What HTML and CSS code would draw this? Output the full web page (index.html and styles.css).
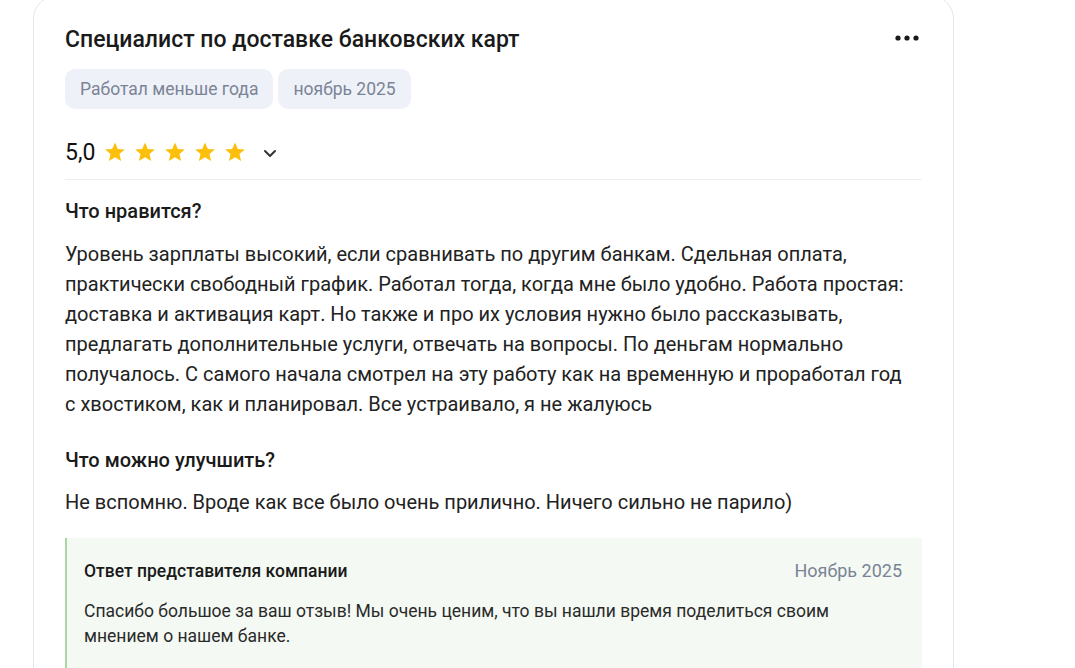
FILE: index.html
```html
<!DOCTYPE html>
<html lang="ru">
<head>
<meta charset="utf-8">
<link rel="stylesheet" href="styles.css">
</head>
<body>
<div class="page">
  <article class="card">
    <header class="head">
      <h2 class="title">Специалист по доставке банковских карт</h2>
      <button class="more" aria-label="Ещё">
        <svg width="24" height="6" viewBox="0 0 24 6"><circle cx="3" cy="3" r="2.6" fill="#1a1a1a"/><circle cx="12" cy="3" r="2.6" fill="#1a1a1a"/><circle cx="21" cy="3" r="2.6" fill="#1a1a1a"/></svg>
      </button>
    </header>
    <div class="tags">
      <span class="tag">Работал меньше года</span>
      <span class="tag">ноябрь 2025</span>
    </div>
    <div class="rating">
      <span class="score">5,0</span>
      <span class="stars">
        <svg class="star" viewBox="0 0 24 24"><path d="M12 1.5l3.1 7.1 7.6.6-5.8 5 1.8 7.5L12 17.7l-6.7 4 1.8-7.5-5.8-5 7.6-.6z" fill="#fcbf0b"/></svg>
        <svg class="star" viewBox="0 0 24 24"><path d="M12 1.5l3.1 7.1 7.6.6-5.8 5 1.8 7.5L12 17.7l-6.7 4 1.8-7.5-5.8-5 7.6-.6z" fill="#fcbf0b"/></svg>
        <svg class="star" viewBox="0 0 24 24"><path d="M12 1.5l3.1 7.1 7.6.6-5.8 5 1.8 7.5L12 17.7l-6.7 4 1.8-7.5-5.8-5 7.6-.6z" fill="#fcbf0b"/></svg>
        <svg class="star" viewBox="0 0 24 24"><path d="M12 1.5l3.1 7.1 7.6.6-5.8 5 1.8 7.5L12 17.7l-6.7 4 1.8-7.5-5.8-5 7.6-.6z" fill="#fcbf0b"/></svg>
        <svg class="star" viewBox="0 0 24 24"><path d="M12 1.5l3.1 7.1 7.6.6-5.8 5 1.8 7.5L12 17.7l-6.7 4 1.8-7.5-5.8-5 7.6-.6z" fill="#fcbf0b"/></svg>
      </span>
      <svg class="chev" width="14" height="9" viewBox="0 0 14 9"><path d="M2 2l5 5 5-5" fill="none" stroke="#333" stroke-width="2" stroke-linecap="round" stroke-linejoin="round"/></svg>
    </div>
    <div class="section">
      <h3 class="sub">Что нравится?</h3>
      <p class="text">Уровень зарплаты высокий, если сравнивать по другим банкам. Сдельная оплата, практически свободный график. Работал тогда, когда мне было удобно. Работа простая: доставка и активация карт. Но также и про их условия нужно было рассказывать, предлагать дополнительные услуги, отвечать на вопросы. По деньгам нормально получалось. С самого начала смотрел на эту работу как на временную и проработал год с хвостиком, как и планировал. Все устраивало, я не жалуюсь</p>
      <h3 class="sub sub2">Что можно улучшить?</h3>
      <p class="text text2">Не вспомню. Вроде как все было очень прилично. Ничего сильно не парило)</p>
    </div>
    <div class="reply">
      <div class="reply-head">
        <span class="reply-title">Ответ представителя компании</span>
        <span class="reply-date">Ноябрь 2025</span>
      </div>
      <p class="reply-text">Спасибо большое за ваш отзыв! Мы очень ценим, что вы нашли время поделиться своим мнением о нашем банке.</p>
    </div>
  </article>
</div>
</body>
</html>
```
FILE: styles.css
```css
* { box-sizing: border-box; }
html, body { margin: 0; padding: 0; background: #fff; }
body { font-family: Roboto, "Noto Sans", Arial, sans-serif; color: #1f1f1f; overflow: hidden; height: 668px; }
.page { padding-left: 33px; width: 954px; }
.card {
  margin-top: -5px;
  border: 1px solid #e3e6ee;
  border-radius: 24px;
  padding: 29px 30px 40px 31px;
  background: #fff;
}
.head { display: flex; justify-content: space-between; align-items: flex-start; }
.title { margin: 0; font-size: 23px; font-weight: 500; line-height: 30px; color: #1a1a1a; letter-spacing: 0; }
.more { border: 0; background: none; padding: 0; margin: 10px 4px 0 0; display: flex; }
.tags { display: flex; gap: 5px; margin-top: 14px; }
.tag { background: #eef1f8; color: #7b8496; border-radius: 10px; height: 40px; padding: 0 15px; font-size: 17.5px; display: flex; align-items: center; }
.rating { display: flex; align-items: center; height: 30px; margin-top: 28px; }
.score { font-size: 23px; font-weight: 400; color: #111; margin-right: 9px; }
.stars { display: flex; gap: 8px; }
.star { width: 22px; height: 22px; display: block; }
.chev { margin-left: 17px; margin-top: 2px; }
.section { border-top: 1px solid #eeeff2; margin-top: 12px; width: 857px; padding-top: 17px; }
.sub { margin: 0; font-size: 20px; font-weight: 500; line-height: 28px; color: #1a1a1a; }
.sub2 { margin-top: 27px; }
.text { margin: 14px 0 0; font-size: 20px; line-height: 30px; color: #222; max-width: 846px; }
.text2 { margin-top: 13px; }
.reply {
  margin-top: 21px;
  width: 857px;
  background: #f4f9f3;
  border-left: 2px solid #a6d8a0;
  padding: 22px 20px 30px 17px;
}
.reply-head { display: flex; justify-content: space-between; align-items: center; }
.reply-title { font-size: 17.5px; font-weight: 500; color: #1a1a1a; }
.reply-date { font-size: 18px; color: #7a8496; }
.reply-text { margin: 18px 0 0; font-size: 17.5px; line-height: 25px; color: #2a2a2a; }
```
